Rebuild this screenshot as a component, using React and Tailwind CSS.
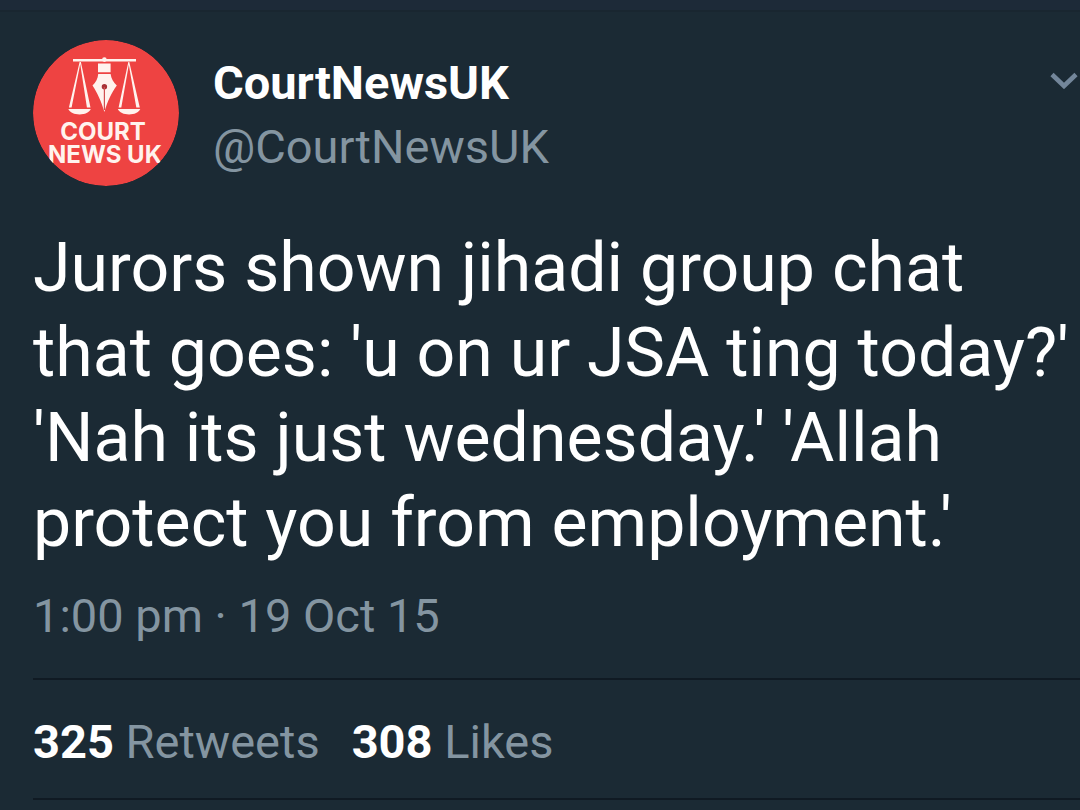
const tweet = {
  name: "CourtNewsUK",
  handle: "@CourtNewsUK",
  lines: [
    "Jurors shown jihadi group chat",
    "that goes: 'u on ur JSA ting today?'",
    "'Nah its just wednesday.' 'Allah",
    "protect you from employment.'",
  ],
  time: "1:00 pm · 19 Oct 15",
  retweets: 325,
  likes: 308,
};

function Avatar() {
  return (
    <svg viewBox="0 0 146 146" className="size-[146px] shrink-0 overflow-hidden rounded-full" role="img" aria-label="Court News UK">
      <circle cx="73" cy="73" r="73" fill="#ee4342" />
      <g fill="#fff3ee">
        {/* Beam */}
        <path d="M40 19h63v2.6H40z" />
        <circle cx="71.4" cy="19.6" r="2.3" />
        {/* Pen nib */}
        <path d="M65 23.5h12.6v8.8H65z" />
        <path d="M65.2 34h12.4c.6 4.5 2.8 8.3 6.2 11.4C78.5 53 74.5 61 71.4 72 68.3 61 64.3 53 59.5 45.4c3.4-3.1 5.4-6.9 5.7-11.4z" />
        {/* Pans */}
        <path d="M35.3 69h22.5c-1.5 3.6-6 5.4-11.2 5.4S36.8 72.6 35.3 69zM84.8 69h22.5c-1.5 3.6-6 5.4-11.2 5.4S86.3 72.6 84.8 69z" />
        {/* Strings */}
        <path d="M46.6 22h1l-9 45.5h-2.7zM46.9 22h1l9.6 45.5h-3.6zM95.3 22h1l-8 45.5h-2.7zM95.3 22h1l10.5 45.5h-3.5z" />
      </g>
      <circle cx="71.4" cy="46.7" r="2.7" fill="#a93236" />
      <path d="M71.4 47v23" stroke="#d05050" strokeWidth="1.2" />
      <g fill="#fff3ee" fontFamily="Inter, sans-serif" fontWeight="700" fontSize="24" textAnchor="middle">
        <text x="70" y="100">COURT</text>
        <text x="72" y="123">NEWS UK</text>
      </g>
    </svg>
  );
}

export default function App() {
  return (
    <main className="min-h-screen overflow-hidden border-t-[10px] border-[#1d2a38] bg-[#1b2a34] font-['Roboto',sans-serif] text-white">
      <article className="border-t-2 border-[#192630] pl-[33px] pt-7">
        <header className="flex gap-[34px]">
          <Avatar />
          <div className="flex-1 pt-[15px]">
            <h1 className="text-[47px] font-bold leading-[56px]">{tweet.name}</h1>
            <p className="pt-2 text-[47px] leading-[56px] text-[#8495a1]">{tweet.handle}</p>
          </div>
          <button type="button" aria-label="More options" className="h-20 pr-0.5 text-[#73869a]">
            <svg viewBox="0 0 28 17" className="h-[17px] w-7" fill="none" stroke="currentColor" strokeWidth="4.6">
              <path d="M2 2.5 14 14 26 2.5" />
            </svg>
          </button>
        </header>

        <p className="pt-10 text-[68px] leading-[85px]">
          {tweet.lines.map((line) => (
            <span key={line} className="block whitespace-nowrap">{line}</span>
          ))}
        </p>

        <p className="pt-[22px] text-[47px] leading-[56px] text-[#8495a1]">{tweet.time}</p>

        <div className="mt-[34px] flex gap-8 border-y-2 border-[#101a23] pb-7 pt-[34px] text-[47px] leading-[56px]">
          <p><strong>{tweet.retweets}</strong> <span className="text-[#8495a1]">Retweets</span></p>
          <p><strong>{tweet.likes}</strong> <span className="text-[#8495a1]">Likes</span></p>
        </div>
      </article>
    </main>
  );
}
